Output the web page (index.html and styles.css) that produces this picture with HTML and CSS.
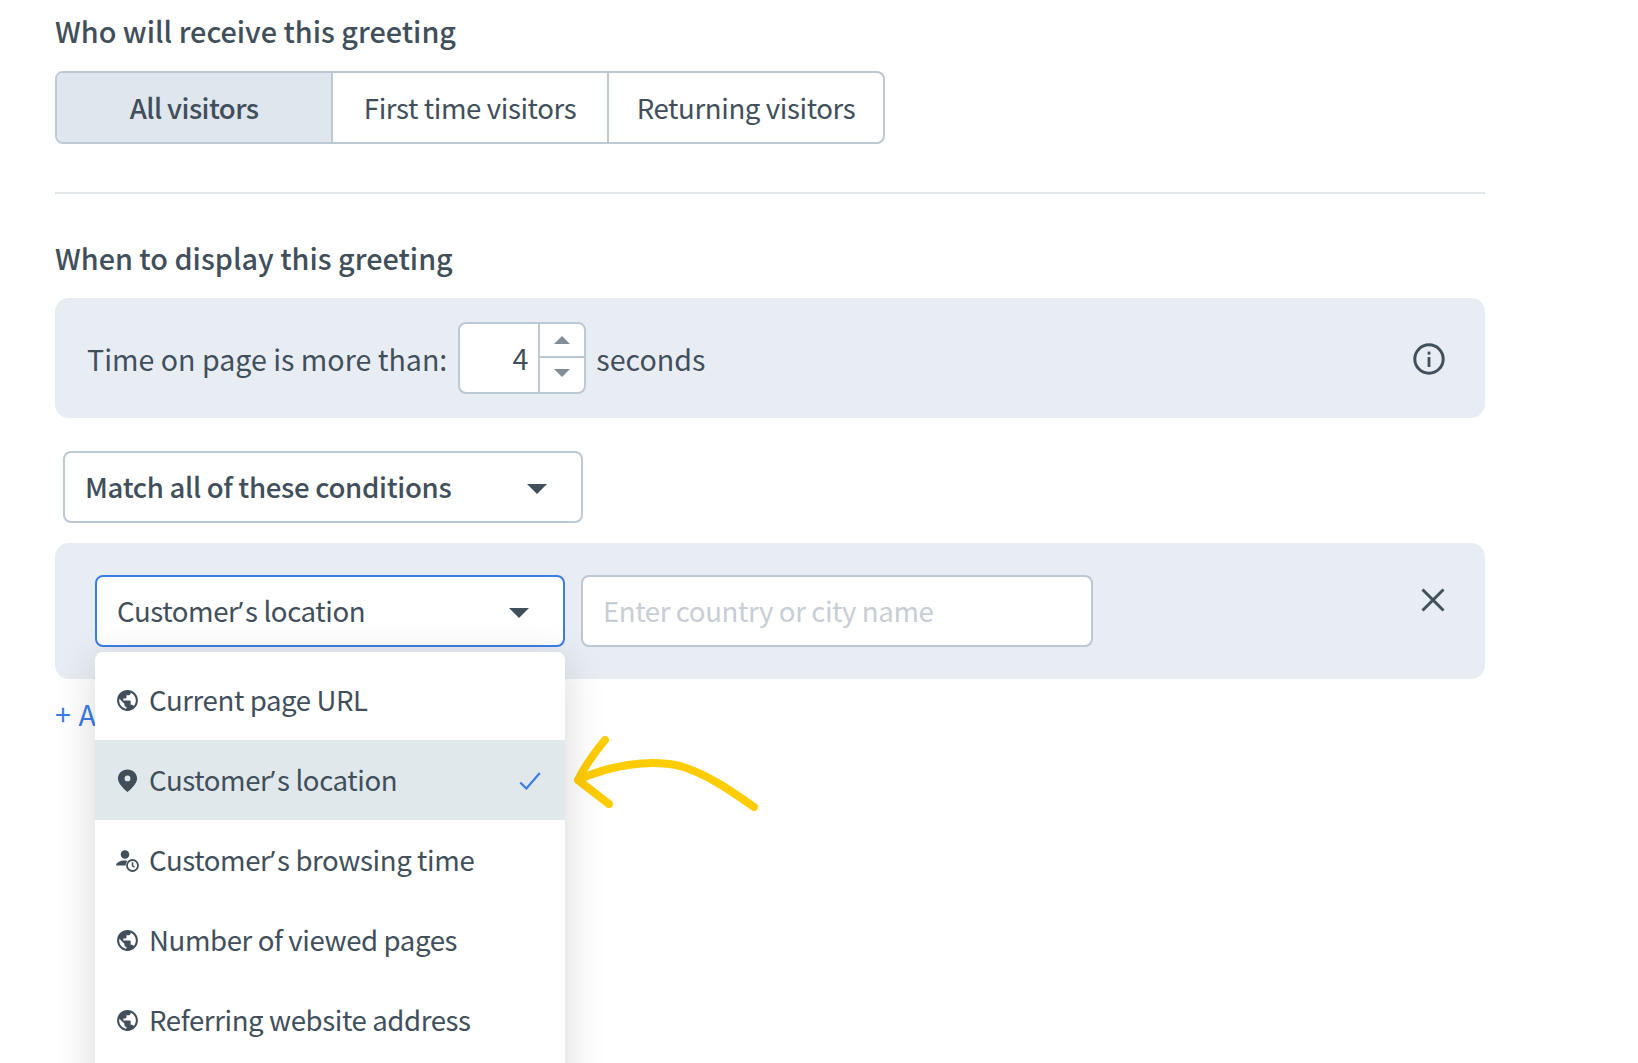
FILE: index.html
```html
<!DOCTYPE html>
<html lang="en">
<head>
<meta charset="utf-8">
<title>Greeting settings</title>
<link rel="stylesheet" href="styles.css">
</head>
<body>
<svg class="sprite" width="0" height="0" aria-hidden="true">
  <symbol id="globe" viewBox="0 0 24 24"><path d="M12 2C6.48 2 2 6.48 2 12s4.48 10 10 10 10-4.48 10-10S17.52 2 12 2zm-1 17.93c-3.95-.49-7-3.85-7-7.93 0-.62.08-1.21.21-1.79L9 15v1c0 1.1.9 2 2 2v1.93zm6.9-2.54c-.26-.81-1-1.39-1.9-1.39h-1v-3c0-.55-.45-1-1-1H8v-2h2c.55 0 1-.45 1-1V7h2c1.1 0 2-.9 2-2v-.41c2.93 1.19 5 4.06 5 7.41 0 2.08-.8 3.97-2.1 5.39z"/></symbol>
</svg>
<main class="page">
  <h2 class="heading">Who will receive this greeting</h2>
  <div class="segmented">
    <div class="segment segment-active">All visitors</div>
    <div class="segment">First time visitors</div>
    <div class="segment">Returning visitors</div>
  </div>
  <hr class="divider">
  <h2 class="heading">When to display this greeting</h2>
  <section class="panel panel-time">
    <span>Time on page is more than:</span>
    <div class="number">
      <span class="number-value">4</span>
      <div class="stepper">
        <div class="step step-up"><span class="tri tri-up"></span></div>
        <div class="step step-down"><span class="tri tri-down"></span></div>
      </div>
    </div>
    <span>seconds</span>
    <svg class="info" viewBox="0 0 32 32"><circle cx="16" cy="16" r="14.2" fill="none" stroke="#414f5b" stroke-width="3"/><rect x="14.6" y="14" width="2.8" height="10" fill="#414f5b"/><rect x="14.6" y="8.6" width="2.8" height="3" fill="#414f5b"/></svg>
  </section>
  <div class="select select-match">
    <span>Match all of these conditions</span>
    <span class="caret"></span>
  </div>
  <section class="panel panel-cond">
    <div class="select-wrap">
      <div class="select select-focus">
        <span>Customer<span class="apos">’</span>s location</span>
        <span class="caret"></span>
      </div>
      <ul class="menu">
        <li class="menu-item"><svg class="icon"><use href="#globe"/></svg><span>Current page URL</span></li>
        <li class="menu-item menu-item-on">
          <svg class="icon" viewBox="0 0 24 24"><path d="M12 1.500C7 1.500 2.800 5.300 2.800 10.200c0 5.600 9.200 12.800 9.200 12.800s9.200-7.200 9.200-12.800C21.200 5.300 17 1.500 12 1.500zm0 11.300a2.800 2.800 0 110-5.600 2.800 2.800 0 010 5.600z"/></svg>
          <span>Customer<span class="apos">’</span>s location</span>
          <svg class="check" viewBox="0 0 22 18"><path d="M1.200 10.500l6.200 6L20.800 1" fill="none" stroke="#3b7de8" stroke-width="2.200"/></svg>
        </li>
        <li class="menu-item">
          <svg class="icon" viewBox="0 0 25 25"><circle cx="10" cy="6.500" r="4.300"/><path d="M1 17.500c.5-3.300 4.500-5 8.500-5 1 0 2 .1 2.800.4-1 1.300-1.500 2.900-1.600 4.600z"/><circle cx="17.500" cy="17.500" r="5.500" fill="none" stroke="#414f5b" stroke-width="1.800"/><path d="M17.500 14.200v3.600l2 1.300" fill="none" stroke="#414f5b" stroke-width="1.500"/></svg>
          <span>Customer<span class="apos">’</span>s browsing time</span>
        </li>
        <li class="menu-item"><svg class="icon"><use href="#globe"/></svg><span>Number of viewed pages</span></li>
        <li class="menu-item"><svg class="icon"><use href="#globe"/></svg><span>Referring website address</span></li>
      </ul>
    </div>
    <div class="field">Enter country or city name</div>
    <svg class="close" viewBox="0 0 24 24"><path d="M1.500 1.500l21 21M22.500 1.500l-21 21" fill="none" stroke="#414f5b" stroke-width="3"/></svg>
  </section>
  <a class="add-link">+ Add condition</a>
</main>
<svg class="arrow" viewBox="0 0 1638 1063" aria-hidden="true">
  <path d="M605 740C594 753 584 768 578 780L609 804M578 780C610 765 650 759 680 766C705 773 730 790 754 807" fill="none" stroke="#ffcc00" stroke-width="8" stroke-linecap="round" stroke-linejoin="round"/>
</svg>
</body>
</html>
```
FILE: styles.css
```css
html, body {
  margin: 0;
  height: 1063px;
  overflow: hidden;
  background: #fff;
}
body {
  position: relative;
  font-family: "Noto Sans CJK SC", "Noto Sans", sans-serif;
  font-size: 27.6px;
  letter-spacing: -.4px;
  color: #414f5b;
}
.sprite { position: absolute; }
.apos {
  font-family: "Open Sans", sans-serif;
  letter-spacing: 2px;
}
.page {
  width: 1430px;
  margin-left: 55px;
}
.heading {
  margin: 0;
  height: 64px;
  line-height: 62px;
  font-size: 28.8px;
  font-weight: 500;
  letter-spacing: 0;
}
.segmented {
  display: flex;
  margin-top: 7px;
  width: 830px;
  height: 73px;
  box-sizing: border-box;
  border: 2px solid #bcc8d4;
  border-radius: 8px;
  overflow: hidden;
}
.segment {
  flex: 0 0 276px;
  display: flex;
  align-items: center;
  justify-content: center;
  border-left: 2px solid #bcc8d4;
  box-sizing: border-box;
  padding-bottom: 1px;
}
.segment:first-child { border-left: 0; flex-basis: 274px; }
.segment-active { background: #dfe6ed; font-weight: 500; letter-spacing: -.6px; }
.divider {
  margin: 48px 0 33px;
  border: 0;
  height: 2px;
  background: #e1e6ea;
}
.panel {
  display: flex;
  background: #e8edf4;
  border-radius: 14px;
  box-sizing: border-box;
}
.panel-time {
  margin-top: 7px;
  height: 120px;
  padding: 0 38px 0 32px;
  align-items: center;
  font-size: 28.6px;
  letter-spacing: 0;
}
.number {
  display: flex;
  margin: 0 10px 0 11px;
  width: 128px;
  height: 72px;
  box-sizing: border-box;
  border: 2px solid #bcc8d4;
  border-radius: 8px;
  background: #fff;
  overflow: hidden;
}
.number-value {
  flex: 1;
  line-height: 68px;
  text-align: right;
  padding-right: 10px;
}
.stepper {
  display: flex;
  flex-direction: column;
  width: 44px;
  border-left: 2px solid #bcc8d4;
}
.step {
  display: flex;
  align-items: center;
  justify-content: center;
  box-sizing: border-box;
}
.step-up { flex: 0 0 32px; }
.step-down {
  flex: 1;
  border-top: 2px solid #bcc8d4;
  padding-bottom: 4px;
}
.tri {
  width: 0;
  height: 0;
  border-left: 8px solid transparent;
  border-right: 8px solid transparent;
}
.tri-up { border-bottom: 8px solid #838d96; }
.tri-down { border-top: 8px solid #838d96; }
.info {
  width: 32px;
  height: 32px;
  margin: 2px 2px 0 auto;
}
.select {
  display: flex;
  align-items: center;
  justify-content: space-between;
  height: 72px;
  box-sizing: border-box;
  border: 2px solid #bcc8d4;
  border-radius: 8px;
  background: #fff;
  padding: 0 34px 3px 20px;
}
.select-match {
  margin: 33px 0 0 8px;
  width: 520px;
  font-weight: 500;
  letter-spacing: -.32px;
}
.caret {
  width: 0;
  height: 0;
  margin-top: 6px;
  border-left: 10px solid transparent;
  border-right: 10px solid transparent;
  border-top: 10px solid #414f5b;
}
.panel-cond {
  position: relative;
  margin-top: 20px;
  height: 136px;
  padding: 32px 0 0 40px;
  align-items: flex-start;
}
.select-wrap {
  position: relative;
  width: 470px;
  z-index: 1;
}
.select-focus {
  border-color: #3b7de8;
}
.field {
  margin-left: 16px;
  width: 512px;
  height: 72px;
  line-height: 66px;
  box-sizing: border-box;
  border: 2px solid #bcc8d4;
  border-radius: 8px;
  background: #fff;
  padding: 0 20px;
  color: #c7ced5;
}
.close {
  position: absolute;
  top: 45px;
  right: 40px;
  width: 24px;
  height: 24px;
}
.menu {
  position: absolute;
  top: 77px;
  left: 0;
  width: 470px;
  margin: 0;
  padding: 8px 0 40px;
  list-style: none;
  background: #fff;
  border-radius: 8px 8px 0 0;
  box-shadow: 0 8px 40px rgba(0, 0, 0, .16);
}
.menu-item {
  display: flex;
  align-items: center;
  height: 80px;
  box-sizing: border-box;
  padding: 0 24px 0 20px;
}
.menu-item > span { padding-bottom: 2px; }
.menu-item-on { background: #e0e8ec; }
.icon {
  flex: none;
  width: 25px;
  height: 25px;
  margin-right: 9px;
  fill: #414f5b;
}
.check {
  width: 22px;
  height: 18px;
  margin: 2px 0 0 auto;
}
.add-link {
  display: block;
  margin-top: 15px;
  line-height: 40px;
  word-spacing: 2px;
  font-size: 28.6px;
  color: #3b7de8;
}
.arrow {
  position: absolute;
  left: 0;
  top: 0;
  width: 1638px;
  height: 1063px;
  pointer-events: none;
}
```
